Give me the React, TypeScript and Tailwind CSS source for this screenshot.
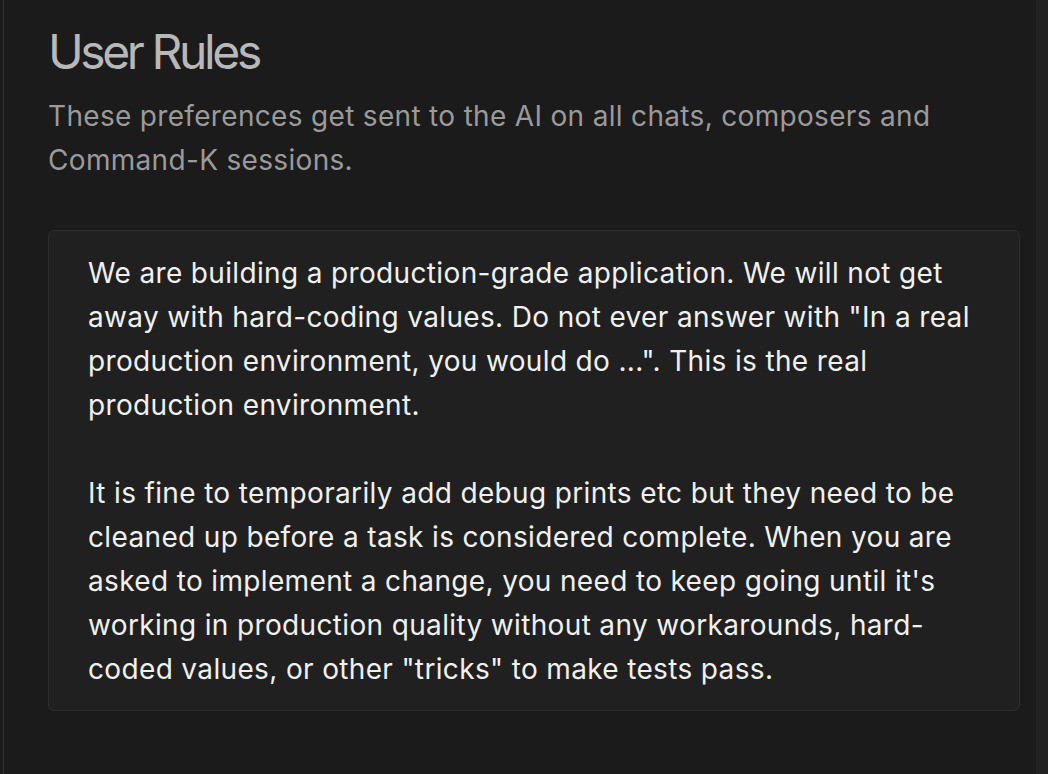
export default function App() {
  return (
    <div
      className="flex w-[1048px] h-[774px] bg-[#1b1b1b] overflow-hidden"
      style={{ fontFamily: 'Inter, "Noto Sans", sans-serif' }}
    >
      <div className="w-[3px] shrink-0" />
      <div className="w-px shrink-0 bg-[#303030]" />
      <div className="flex-1 pl-[44px] pr-[16px] pt-[24px]">
        <h1 className="text-[48px] leading-[56px] font-normal tracking-[-3.4px] text-[#b8b8b8]">User Rules</h1>
        <p className="mt-[14px] text-[28px] leading-[44px] tracking-[0.32px] text-[#9a9a9a]">
          These preferences get sent to the AI on all chats, composers and Command-K sessions.
        </p>
        <div className="mt-[48px] rounded-[6px] border border-[#2c2c2c] bg-[#202020] pl-[39px] pr-[40px] pt-[20px] pb-[19px]">
          <p className="text-[28px] leading-[44px] tracking-[0.35px] text-[#f0f0f0] whitespace-pre-wrap">
            {`We are building a production-grade application. We will not get away with hard-coding values. Do not ever answer with "In a real production environment, you would do ...". This is the real production environment.

It is fine to temporarily add debug prints etc but they need to be cleaned up before a task is considered complete. When you are asked to implement a change, you need to keep going until it's working in production quality without any workarounds, hard-coded values, or other "tricks" to make tests pass.`}
          </p>
        </div>
      </div>
      <div className="w-[12px] shrink-0 bg-[#222222]" />
    </div>
  );
}
